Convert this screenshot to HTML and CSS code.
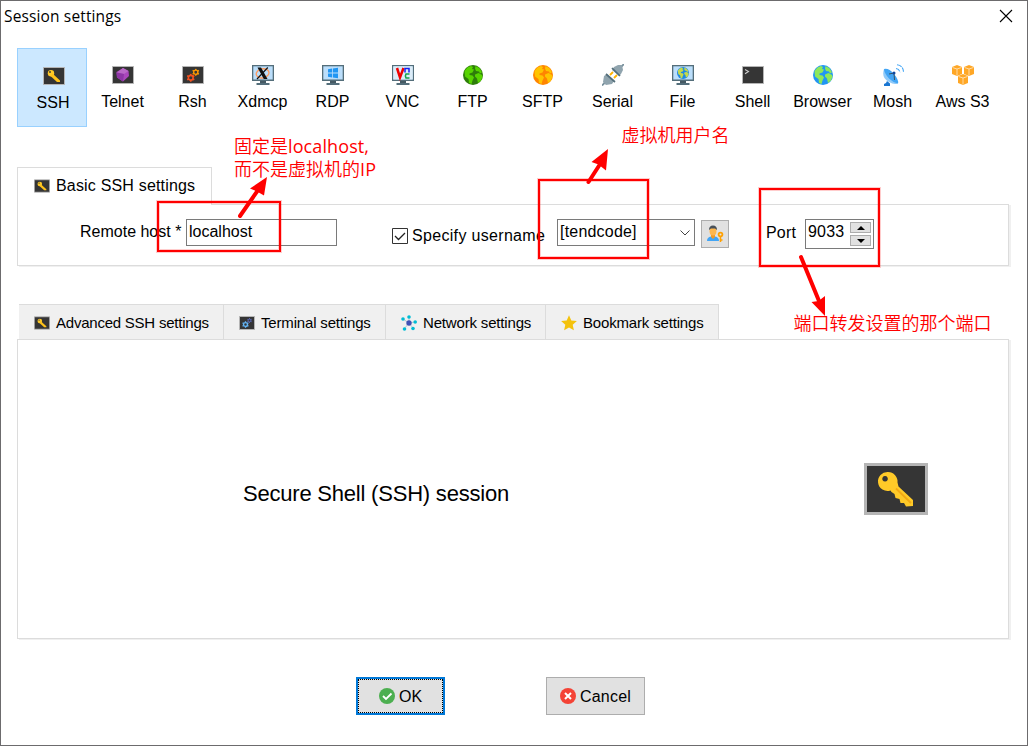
FILE: index.html
```
<!DOCTYPE html>
<html lang="zh-CN">
<head>
<meta charset="utf-8">
<title>Session settings</title>
<link rel="stylesheet" href="styles.css">
</head>
<body>
<svg class="defs" aria-hidden="true">
  <symbol id="key" viewBox="0 0 64 52">
    <path d="M1.5 1.5h61v49h-61z" fill="#353535" stroke="#b5b5b5" stroke-width="3"/>
    <path fill="#ffca28" fill-rule="evenodd" d="M24 9a9.500 9.500 0 0 1 9.500 10.500l1 4L49 37v6l-7 .5-2-3.500-3.500 0-1-4-4-1-1-4-3-2-1-1.500A9.500 9.500 0 1 1 24 9zM21 13a2.800 2.800 0 1 0 .1 0z"/>
    <path d="M32 25.500l15 14.500" stroke="#f3a914" stroke-width="1.800"/>
  </symbol>
  <symbol id="keysmall" viewBox="0 0 22 18">
    <path d="M.5.5h21v17H.5z" fill="#353535" stroke="#b5b5b5"/>
    <circle cx="8" cy="6.200" r="3.200" fill="#ffca28"/><circle cx="7" cy="5" r=".9" fill="#353535"/>
    <path d="M9.500 6.500l7.500 7v1.500h-3L7.500 9z" fill="#ffc21a"/>
  </symbol>
  <symbol id="gear" viewBox="0 0 10 10">
    <circle cx="5" cy="5" r="2.8" fill="none" stroke="currentColor" stroke-width="1.900"/>
    <path d="M5 .2v2M5 7.800v2M.8 2.600l1.800 1M7.400 6.400l1.800 1M.8 7.400l1.800-1M7.400 3.600l1.800-1" stroke="currentColor" stroke-width="1.900"/>
  </symbol>
  <symbol id="screen" viewBox="0 0 22 20">
    <path d="M0 0h22v16H0z" fill="#546e7a"/><path d="M1.3 1.3h19.4v13.2H1.3z" fill="#bbdefb"/>
    <path d="M8 16h6v2H8z" fill="#455a64"/><path d="M4.5 18h13v2h-13z" fill="#546e7a"/>
  </symbol>
  <symbol id="globe" viewBox="0 0 20 20">
    <circle cx="10" cy="10" r="10" class="sea"/>
    <path class="land" d="M1.500 6l3-3.500L8 1l2 1-1 2 2 .5-1.500 3-3 1 0 1.500 3 .5 1.500 2-1.500 3-1 3.500-2.500-1-.5-4-3.500-2.500zM12.500 1l4 2.200 2.500 4-2 1.300-1-2-3-.5-1-2.500zM12 9.500l3.500-1.500 3.500 2 .5 1.500-1.500 4-3 2.500-1-4.500-2-2z"/>
  </symbol>
</svg>

<main class="dialog">
  <header class="titlebar">
    <span class="title">Session settings</span>
    <svg class="close" viewBox="0 0 14 14"><path d="M1 1l12 12M13 1L1 13"/></svg>
  </header>

  <nav class="types">
    <div class="type selected"><svg width="22" height="18"><use href="#keysmall"/></svg><span>SSH</span></div>
    <div class="type"><svg width="22" height="18" viewBox="0 0 22 18"><path d="M.5.5h21v17H.5z" fill="#353535" stroke="#b5b5b5"/><path d="M11 2l5.500 3 .5 5-6 5.500-6-4-.5-5.500z" fill="#ab47bc"/><path d="M11 2l5.500 3-4.500 3-7-1.500z" fill="#ba68c8"/><path d="M12 8l-1 7.500-6-4-.5-5z" fill="#8e36a6"/></svg><span>Telnet</span></div>
    <div class="type"><svg width="22" height="18" viewBox="0 0 22 18"><path d="M.5.5h21v17H.5z" fill="#353535" stroke="#b5b5b5"/><use class="gear-orange" href="#gear" x="10" y="2.500" width="7.500" height="7.500"/><use class="gear-red" href="#gear" x="4.500" y="7.500" width="8.500" height="8.500"/></svg><span>Rsh</span></div>
    <div class="type"><svg width="22" height="20" viewBox="0 0 22 20"><use href="#screen"/><ellipse cx="10.500" cy="8.500" rx="6.500" ry="4.500" fill="none" stroke="#ff9a5c" stroke-width="1.300" transform="rotate(-12 10 8)"/><path d="M5.500 2.500h3.500l6.500 11.500h-3.700z" fill="#111"/><path d="M15.800 2.500L5 14" stroke="#111" stroke-width="1.200"/></svg><span>Xdmcp</span></div>
    <div class="type"><svg width="22" height="20" viewBox="0 0 22 20"><use href="#screen"/><path d="M6 4.200l4-.6v4H6zM10.800 3.500l5.200-.8v4.900h-5.200zM6 8.400h4v4l-4-.6zM10.800 8.400H16v4.900l-5.200-.8z" fill="#2196f3"/></svg><span>RDP</span></div>
    <div class="type"><svg width="22" height="20" viewBox="0 0 22 20"><use href="#screen"/><path d="M1.300 1.300h19.400v13.200H1.300z" fill="#dcecf8"/><path d="M5 3l3 9.500L11.500 3" fill="none" stroke="#f00000" stroke-width="2.500"/><path d="M13 7.500V3.500h4v4" fill="none" stroke="#1420f0" stroke-width="1.500"/><path d="M17.500 9h-3.500q-1.200 2 0 4h3.500" fill="none" stroke="#16a34a" stroke-width="1.500"/></svg><span>VNC</span></div>
    <div class="type"><svg class="globe green" width="20" height="20" viewBox="0 0 20 20"><use href="#globe"/></svg><span>FTP</span></div>
    <div class="type"><svg class="globe orange" width="20" height="20" viewBox="0 0 20 20"><use href="#globe"/></svg><span>SFTP</span></div>
    <div class="type"><svg width="22" height="22" viewBox="0 0 22 22"><path d="M0 21.500l3-3M19 3l3-3" stroke="#78909c" stroke-width="1.800"/><path d="M2 12l3-2 7 7-2 3-6 1-3-3zM12 3l4-2 4 0 1 5-2 4-2 2-7-6z" fill="#90a4ae"/><path d="M4 10l9 8M10 4l8 8" stroke="#546e7a" stroke-width="1.700"/><path d="M8 11l3-3M12 14l3-3" stroke="#ffb300" stroke-width="1.800"/></svg><span>Serial</span></div>
    <div class="type"><svg width="22" height="20" viewBox="0 0 22 20"><use href="#screen"/><g class="globe file"><use href="#globe" x="5" y="2" width="12" height="12"/></g></svg><span>File</span></div>
    <div class="type"><svg width="22" height="18" viewBox="0 0 22 18"><path d="M.5.5h21v17H.5z" fill="#353535" stroke="#b5b5b5"/><path d="M3 3.500l3.500 2L3 7.800" fill="none" stroke="#ccc" stroke-width="1.100"/></svg><span>Shell</span></div>
    <div class="type"><svg class="globe blue" width="20" height="20" viewBox="0 0 20 20"><use href="#globe"/></svg><span>Browser</span></div>
    <div class="type"><svg width="22" height="22" viewBox="0 0 22 22"><path d="M5 17l3 2.500V22H2v-2l2-1z" fill="#1976d2"/><path d="M2 5q-3 9 5 13 5 3 9 1.500z" fill="#90caf9"/><path d="M2 5q5-1 10 5 5 6 4 9.500-5-1-9-5Q2 9 2 5z" fill="#42a5f5"/><path d="M7 10l5-1 .5 7" fill="none" stroke="#37474f" stroke-width=".9"/><circle cx="12" cy="9" r="1.500" fill="#0d47a1"/><path d="M14 4.500q3.500.5 4 4M15 .8q6 .5 6.500 7" fill="none" stroke="#42a5f5" stroke-width="1.100" stroke-dasharray="5 1"/></svg><span>Mosh</span></div>
    <div class="type"><svg width="22" height="20" viewBox="0 0 22 20"><g id="cube"><path d="M0 2l5-2 5 2v7l-5 2-5-2z" fill="#ffa726"/><path d="M.5 2.500L5 4l4.500-1.500M5 4v6.500" fill="none" stroke="#ffe0b2" stroke-width=".9"/></g><use href="#cube" x="12"/><use href="#cube" x="6" y="9"/></svg><span>Aws S3</span></div>
  </nav>

  <section class="basic">
    <div class="basic-tab"><svg width="16" height="14"><use href="#keysmall" width="16" height="14"/></svg><span>Basic SSH settings</span></div>
    <div class="panel form">
      <label class="host-label">Remote host *</label>
      <div class="field host">localhost</div>
      <svg class="check" width="16" height="16" viewBox="0 0 16 16"><path d="M.5.5h15v15H.5z" fill="#fff" stroke="#333"/><path d="M3 8l3.500 3.500L13 5" fill="none" stroke="#222" stroke-width="1.300"/></svg>
      <label class="user-label">Specify username</label>
      <div class="field user"><span>[tendcode]</span><svg width="10" height="6" viewBox="0 0 10 6"><path d="M.5.5L5 5 9.500.5" fill="none" stroke="#444"/></svg></div>
      <div class="user-button"><svg width="18" height="18" viewBox="0 0 18 18"><path d="M0 16q0-4 4-4.500h4q4 .5 4 4.500z" fill="#42a5f5"/><path d="M4 10h4v2l-2 2-2-2z" fill="#f59a23"/><ellipse cx="6" cy="6" rx="3.500" ry="4.500" fill="#ffb74d"/><path d="M2 5q0-4.500 4-4.500T10 5L8 3.500H4z" fill="#485059"/><circle cx="13.500" cy="9.500" r="1.900" fill="none" stroke="#ffa000" stroke-width="1.800"/><path d="M13.500 11.500V17M13.500 15h2" stroke="#ffa000" stroke-width="1.500"/></svg></div>
      <label class="port-label">Port</label>
      <div class="field port"><span>9033</span><div class="spin"><i><svg width="8" height="4"><path d="M0 4l4-4 4 4z"/></svg></i><i><svg width="8" height="4"><path d="M0 0l4 4 4-4z"/></svg></i></div></div>
    </div>
  </section>

  <section class="advanced">
    <div class="tabs">
      <div class="tab t1"><svg width="16" height="14"><use href="#keysmall" width="16" height="14"/></svg><span>Advanced SSH settings</span></div>
      <div class="tab t2"><svg width="16" height="14" viewBox="0 0 16 14"><path d="M.5.5h15v13H.5z" fill="#353535" stroke="#b5b5b5"/><use class="gear-indigo" href="#gear" x="8" y="2" width="5" height="5"/><use class="gear-sky" href="#gear" x="3" y="5" width="7" height="7"/></svg><span>Terminal settings</span></div>
      <div class="tab t3"><svg width="16" height="16" viewBox="0 0 16 16"><path d="M8 8V2M8 8L2 4M8 8l6-1M8 8l4 5M8 8l-5 6" stroke="#b9c8d1"/><circle cx="8" cy="8" r="2.700" fill="#3f51b5"/><g fill="#00bcd4"><circle cx="8" cy="2" r="1.800"/><circle cx="2" cy="4" r="1.800"/><circle cx="14.200" cy="7" r="1.800"/><circle cx="12" cy="13.500" r="1.800"/><circle cx="3.500" cy="14" r="1.800"/></g></svg><span>Network settings</span></div>
      <div class="tab t4"><svg width="16" height="16" viewBox="0 0 16 16"><path d="M8 .3l2.300 5.100 5.600.6-4.200 3.700 1.200 5.600L8 12.500l-4.900 2.800 1.200-5.600L.1 6l5.600-.6z" fill="#f4c20d"/></svg><span>Bookmark settings</span></div>
    </div>
    <div class="panel intro">
      <span>Secure Shell (SSH) session</span>
      <svg width="64" height="52"><use href="#key"/></svg>
    </div>
  </section>

  <footer class="actions">
    <button class="ok"><svg width="16" height="16" viewBox="0 0 16 16"><circle cx="8" cy="8" r="8" fill="#4caf50"/><path d="M4 8l3 3 5.500-5.500" fill="none" stroke="#fff" stroke-width="1.800"/></svg><span>OK</span></button>
    <button class="cancel"><svg width="16" height="16" viewBox="0 0 16 16"><circle cx="8" cy="8" r="8" fill="#f44336"/><path d="M5 5l6 6M11 5l-6 6" stroke="#fff" stroke-width="2"/></svg><span>Cancel</span></button>
  </footer>

  <svg class="notes" width="1028" height="746" viewBox="0 0 1028 746">
    <g class="halo"><path d="M158 202h122v49H158zM539 180h109v78H539zM760 189h119v77H760z"/></g>
    <g class="frame"><path d="M158 202h122v49H158zM539 180h109v78H539zM760 189h119v77H760z"/></g>
    <g class="shaft"><path d="M240 216l18-26M588.500 182l11-17M801 257l18 44"/></g>
    <g class="head"><path d="M267 177l-17 11.500 7 3 7 4zM608 149l-16.500 13 7 2.500 7.500 6zM825 316l-13.500-14 7-1 6.500-5z"/></g>
    <g class="words">
      <text x="234" y="153" textLength="54">固定是</text><text x="288" y="153" textLength="81" class="latin">localhost,</text>
      <text x="234" y="176" textLength="126">而不是虚拟机的</text><text x="360" y="176" textLength="16" class="latin">IP</text>
      <text x="621.500" y="142" textLength="108">虚拟机用户名</text>
      <text x="793.500" y="330" textLength="198">端口转发设置的那个端口</text>
    </g>
  </svg>
</main>
</body>
</html>
```
FILE: styles.css
```
* { box-sizing: border-box; }
body { margin: 0; background: #fff; color: #000; font: 16px/20px "Liberation Sans", Arial, sans-serif; overflow: hidden; }
svg { display: block; flex: none; }
.defs { display: none; }
.dialog { position: relative; width: 1028px; height: 746px; display: flex; flex-direction: column; border: 1px solid #6c6b6d; white-space: nowrap; }
.titlebar { height: 47px; display: flex; justify-content: space-between; padding: 5px 14px 0 3px; }
.title { font: 15.5px/21px "Open Sans", "Noto Sans", sans-serif; letter-spacing: .14px; }
.close { width: 14px; height: 14px; margin-top: 3px; fill: none; stroke: #000; stroke-width: 1.1; }

.types { display: flex; height: 79px; padding-left: 16px; }
.type { width: 70px; display: flex; flex-direction: column; align-items: center; padding: 16px 0 0 2px; }
.type > svg { height: 22px; }
.type > span { margin: 6px 1px 0 0; line-height: 20px; }
.type.selected { background: #cce8ff; border: 1px solid #99d1ff; padding: 16px 0 0 3px; }

.gear-orange { color: #ff9800; }
.gear-red { color: #f4511e; }
.gear-indigo { color: #5c6bc0; }
.gear-sky { color: #64b5f6; }
.green { --sea: #2e7d0a; --land: #57d400; }
.orange { --sea: #ff8500; --land: #ffc400; }
.blue { --sea: #2196f3; --land: #8ee85a; }
.file { --sea: #1e88e5; --land: #c5d94a; }
.sea { fill: var(--sea); }
.land { fill: var(--land); }

.basic { margin: 40px 0 0 16px; }
.basic-tab { position: relative; z-index: 1; width: 195px; height: 38px; display: flex; align-items: center; gap: 6px; padding: 0 0 2px 16px; border: 1px solid #dcdcdc; border-bottom: 0; background: #fff; letter-spacing: .18px; }
.panel { width: 992px; border: 1px solid #dcdcdc; box-shadow: 2px 1px 0 #f0f0f0; }
.form { height: 62px; margin-top: -1px; display: flex; align-items: flex-start; padding-left: 62px; }
.field { border: 1px solid #7a7a7a; background: #fff; height: 27px; padding: 2px; line-height: 20px; }
.host-label { width: 106px; margin-top: 17px; }
.host { width: 151px; margin-top: 14px; }
.check { margin: 23px 4px 0 55px; }
.user-label { width: 145px; margin-top: 21px; letter-spacing: .32px; }
.user { width: 138px; margin-top: 14px; display: flex; justify-content: space-between; padding-right: 4px; }
.user span { letter-spacing: .2px; }
.user svg { margin-top: 8px; }
.user-button { width: 28px; height: 28px; margin: 15px 0 0 6px; padding: 4px 5px; background: #e1e1e1; border: 1px solid #adadad; }
.port-label { width: 39px; margin: 18px 0 0 37px; letter-spacing: .2px; }
.port { width: 69px; height: 30px; margin-top: 14px; display: flex; justify-content: space-between; }
.port span { letter-spacing: .2px; }
.spin { display: flex; flex-direction: column; gap: 2px; }
.spin i { width: 21px; height: 11px; border: 1px solid #adadad; background: #e1e1e1; display: grid; place-items: center; }

.advanced { margin: 38px 0 0 16px; }
.tabs { display: flex; width: 700px; height: 35px; margin-left: 2px; background: #f0f0f0; border-top: 1px solid #dcdcdc; font-size: 15px; letter-spacing: -.17px; }
.tab { display: flex; align-items: center; gap: 6px; padding: 2px 0 0 15px; border-right: 1px solid #dcdcdc; }
.tab svg { margin-top: -1px; }
.t1 { width: 205px; letter-spacing: -.23px; }
.t2 { width: 162px; }
.t3 { width: 160px; }
.t4 { width: 173px; }
.intro { height: 300px; display: flex; justify-content: space-between; padding: 123px 80px 0 225px; font-size: 22px; line-height: 62px; letter-spacing: -.21px; }

.actions { display: flex; gap: 101px; margin: 38px 0 0 355px; }
.actions button { height: 38px; display: flex; align-items: center; justify-content: center; gap: 4px; padding: 0; background: #e1e1e1; color: #000; border: 1px solid #adadad; font: 16px/20px "Liberation Sans", Arial, sans-serif; }
.actions span { padding-top: 2px; }
.actions .ok { width: 89px; border: 2px solid #0078d7; outline: 1px dotted #000; outline-offset: -3px; }
.actions .cancel { width: 99px; letter-spacing: .2px; }

.notes { position: absolute; z-index: 2; left: -1px; top: -1px; fill: none; stroke: #f00; pointer-events: none; }
.halo { stroke-width: 4; opacity: .2; }
.frame { stroke-width: 2; }
.shaft { stroke-width: 4; stroke-linecap: round; }
.head { fill: #f00; stroke: none; }
.words { fill: #f00; stroke: none; font: 350 18px "Noto Sans CJK SC", sans-serif; }
.latin { font-family: "Open Sans", "Noto Sans", sans-serif; font-weight: 400; }
```
